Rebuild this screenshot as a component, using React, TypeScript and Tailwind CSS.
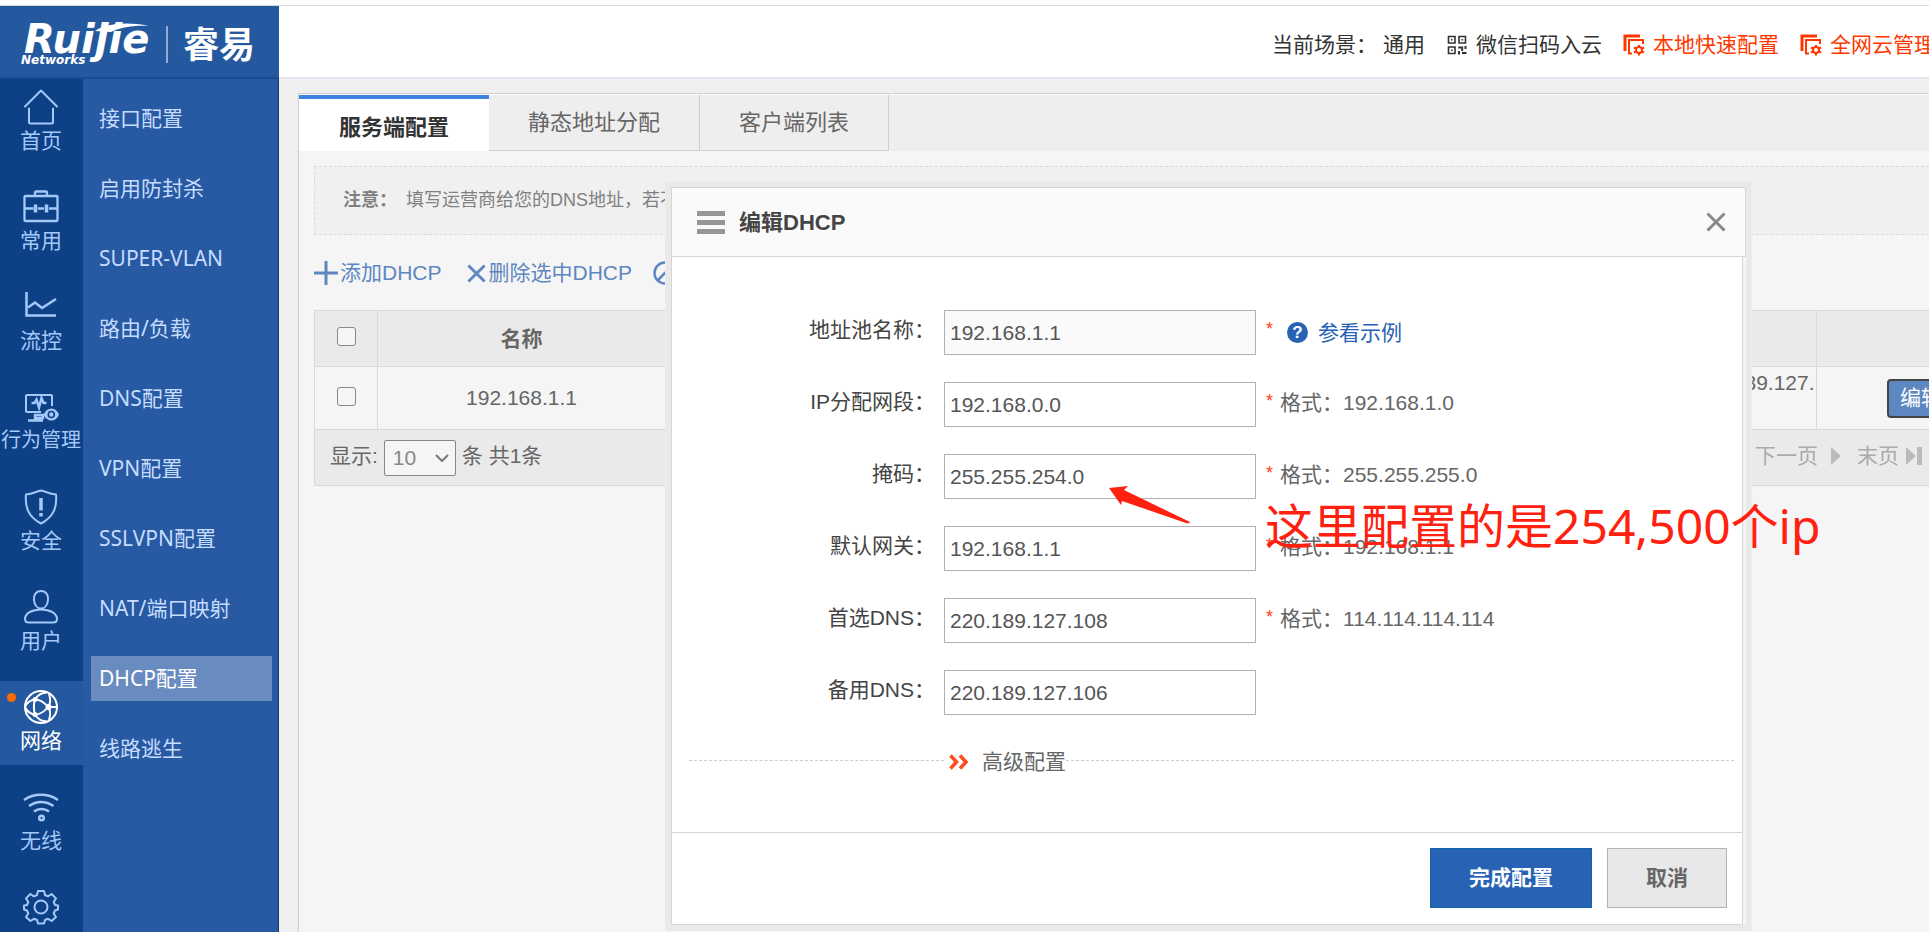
import React, { useState } from 'react';

type IconProps = { className?: string };

// Icons of the left rail, all drawn on a 36x36 grid
const HomeIcon = () => (
  <svg viewBox="0 0 36 36" className="h-9 w-9" fill="none" stroke="currentColor" strokeWidth="2" strokeLinejoin="round" strokeLinecap="round">
    <path d="M2 17.500 18 1.500 34 17.500M6 19.500V33a1.500 1.500 0 0 0 1.500 1.500h21A1.500 1.500 0 0 0 30 33V19.500" />
  </svg>
);

const ToolboxIcon = () => (
  <svg viewBox="0 0 36 36" className="h-9 w-9" fill="none" stroke="currentColor" strokeWidth="2.300">
    <rect x="1.500" y="7" width="33" height="25" rx="1" />
    <path d="M12 7V3.500a1 1 0 0 1 1-1h10a1 1 0 0 1 1 1V7M1.500 19.500h9M15 19.500h6M26 19.500h8.500" />
    <path d="M12.500 15.500v8M23.500 15.500v8" strokeWidth="3.500" />
  </svg>
);

const ChartIcon = () => (
  <svg viewBox="0 0 36 36" className="h-9 w-9" fill="none" stroke="currentColor" strokeWidth="2.500">
    <path d="M3.500 3v23.500H33" />
    <path d="m5 18.500 7-5 7 5.500L33 10" />
  </svg>
);

const MonitorIcon = () => (
  <svg viewBox="0 0 36 36" className="h-9 w-9" fill="none" stroke="currentColor" strokeWidth="2">
    <path d="M18 23H4a1 1 0 0 1-1-1V7a1 1 0 0 1 1-1h24a1 1 0 0 1 1 1v10" />
    <path d="M8.500 14h3l2-3.500 2.500 8 2.500-9.500 2 5h3" strokeWidth="2.500" />
    <path d="M12 26h8v3h-8zM5 31.500h15" strokeWidth="2.500" />
    <path d="M20.500 25.500C24 17.500 33 17.500 36 25.500c-3 8-12 8-15.500 0Z" fill="currentColor" stroke="none" />
    <circle cx="28.300" cy="25.500" r="3" stroke="#0d4084" strokeWidth="1.600" />
  </svg>
);

const ShieldIcon = () => (
  <svg viewBox="0 0 36 36" className="h-9 w-9" fill="none" stroke="currentColor" strokeWidth="2" strokeLinejoin="round">
    <path d="M18 1.500C14 2 10 5 3 5.500c-1 11 1 21.500 15 29C32 27 34 16.500 33 5.500 26 5 22 2 18 1.500Z" />
    <path d="M18 9v12.500M18 24v3.500" strokeWidth="3.500" />
  </svg>
);

const UserIcon = () => (
  <svg viewBox="0 0 36 36" className="h-9 w-9" fill="none" stroke="currentColor" strokeWidth="2">
    <path d="M18 2c-5 0-7.500 4-7 9 .5 4.500 3 8.500 7 8.500s6.500-4 7-8.500c.5-5-2-9-7-9Z" />
    <path d="M18 20.500c-9 0-16 4-16 9.500 0 2.500 1.500 3.500 4 3.500h24c2.500 0 4-1 4-3.500 0-5.500-7-9.500-16-9.500Z" />
  </svg>
);

const NetworkIcon = () => (
  <svg viewBox="0 0 36 36" className="h-9 w-9" fill="none" stroke="currentColor" strokeWidth="2">
    <circle cx="18" cy="18" r="16" />
    <path d="M12 10.500c5.500 0 9 2.500 13 7.500-4 5-7.500 7.500-13 7.500-1.500-4-1.500-11 0-15Z" />
    <path d="M12 10.500c3-5 7-7 12-7M12 10.500C7 11 4 13.500 2 18M12 25.500c-5-.5-8-3-10-7.500M12 25.500c3 5 7 7 12 7M25 18c2.500-3 3-7 1-13M25 18c2.500 3 3 7 1 13M25 18h9" />
    <circle cx="12" cy="10.500" r="1.500" fill="currentColor" />
    <circle cx="12" cy="25.500" r="1.500" fill="currentColor" />
    <circle cx="25.500" cy="18" r="2" fill="currentColor" />
  </svg>
);

const WifiIcon = () => (
  <svg viewBox="0 0 36 36" className="h-9 w-9" fill="none" stroke="currentColor" strokeWidth="2.500">
    <path d="M1 11c10-7 24-7 34 0M6 17c7.500-5.500 17-5.500 24.500 0M11 22.500c4.500-3.500 10.500-3.500 15 0" />
    <circle cx="18.500" cy="29" r="2.300" />
  </svg>
);

const GearIcon = () => (
  <svg viewBox="0 0 36 36" className="h-9 w-9" fill="none" stroke="currentColor" strokeWidth="2" strokeLinejoin="round">
    <path d="M15 2h6l1 4 3 1.300L28.600 5 33 9.400 30.700 13l1.300 3 3 .5v4l-3 1-1.300 3L33 28l-4.400 4-3.600-2.200L22 31l-1 3.500h-6L14 31l-3-1.200L7.400 32 3 28l2.300-3.500-1.300-3-3-1v-4l3-.5 1.300-3L3 9.400 7.400 5 11 7.300 14 6Z" />
    <circle cx="18" cy="18" r="6.500" />
  </svg>
);

const QrIcon = () => (
  <svg viewBox="0 0 20 20" className="h-5 w-5" fill="none" stroke="currentColor" strokeWidth="1.600">
    <path d="M1.500 1.500h6.500v6.500h-6.500zM12 1.500h6.500v6.500H12zM1.500 12h6.500v6.500h-6.500z" />
    <path d="M4 4.800h1.600M14.500 4.800h1.600M4 15.200h1.600" />
    <path d="M11.200 12.500h4v3.500M18.500 11v3M12 16v3.500M15 18h4.500" strokeWidth="2" />
  </svg>
);

const ConfigIcon = () => (
  <svg viewBox="0 0 22 22" className="h-[22px] w-[22px]" fill="none" stroke="currentColor" strokeWidth="2">
    <path d="M2 17V2h15" strokeWidth="3" />
    <path d="M9 19.500H6V6h14v4" />
    <circle cx="16" cy="16" r="3" />
    <path d="M16 11v2M16 19v2.500M11 13.500l2 1M19 17.500l2 1M11 18.500l2-1M19 14.500l2-1" />
  </svg>
);

const PlusIcon = ({ className }: IconProps) => (
  <svg viewBox="0 0 24 24" className={className} stroke="currentColor" strokeWidth="3">
    <path d="M12 0v24M0 12h24" />
  </svg>
);

const CrossIcon = ({ className }: IconProps) => (
  <svg viewBox="0 0 20 20" className={className} stroke="currentColor" strokeWidth="3">
    <path d="m1.500 1.500 17 17M18.500 1.500l-17 17" />
  </svg>
);

const BanIcon = () => (
  <svg viewBox="0 0 24 24" className="h-6 w-6" fill="none" stroke="currentColor" strokeWidth="2.500">
    <circle cx="12" cy="12" r="10.500" />
    <path d="m5 19 14-14" />
  </svg>
);

const railItems = [
  { label: '首页', icon: <HomeIcon /> },
  { label: '常用', icon: <ToolboxIcon /> },
  { label: '流控', icon: <ChartIcon /> },
  { label: '行为管理', icon: <MonitorIcon /> },
  { label: '安全', icon: <ShieldIcon /> },
  { label: '用户', icon: <UserIcon /> },
  { label: '网络', icon: <NetworkIcon /> },
  { label: '无线', icon: <WifiIcon /> },
  { label: '', icon: <GearIcon /> },
];

const menuItems = [
  '接口配置',
  '启用防封杀',
  'SUPER-VLAN',
  '路由/负载',
  'DNS配置',
  'VPN配置',
  'SSLVPN配置',
  'NAT/端口映射',
  'DHCP配置',
  '线路逃生',
];

const tabs = ['服务端配置', '静态地址分配', '客户端列表'];

interface Field {
  id: string;
  label: string;
  value: string;
  hint?: string;
  required?: boolean;
  readOnly?: boolean;
}

const fields: Field[] = [
  { id: 'pool', label: '地址池名称', value: '192.168.1.1', required: true, readOnly: true },
  { id: 'network', label: 'IP分配网段', value: '192.168.0.0', required: true, hint: '192.168.1.0' },
  { id: 'mask', label: '掩码', value: '255.255.254.0', required: true, hint: '255.255.255.0' },
  { id: 'gateway', label: '默认网关', value: '192.168.1.1', required: true, hint: '192.168.1.1' },
  { id: 'dns1', label: '首选DNS', value: '220.189.127.108', required: true, hint: '114.114.114.114' },
  { id: 'dns2', label: '备用DNS', value: '220.189.127.106' },
];

const Logo = () => (
  <div className="h-[71px] w-[279px] shrink-0 bg-[#25599f] pl-[21px] text-white">
    <svg viewBox="0 -11 240 71" className="h-[71px] w-[240px]" fill="currentColor" role="img" aria-label="Ruijie Networks 睿易">
      <text x="3" y="36" fontSize="40" fontWeight="700" fontStyle="italic" fontFamily="'DejaVu Sans', sans-serif">Ruijie</text>
      <path d="M74 14C84 7 104 4 128 9 112 8 98 11 90 15Z" />
      <text x="0" y="47" fontSize="12" fontWeight="700" fontStyle="italic" fontFamily="'DejaVu Sans', sans-serif">Networks</text>
      <path d="M145 9h2v37h-2z" opacity="0.5" />
      <text x="162" y="41" fontSize="36" fontWeight="700" fontFamily="'Noto Sans CJK SC', sans-serif">睿易</text>
    </svg>
  </div>
);

const TopBar = () => (
  <header className="flex border-t border-[#d9d9d9] bg-white text-[21px] text-[#333]">
    <Logo />
    <div className="-mr-12 flex flex-1 items-center justify-end pt-[6px] whitespace-nowrap">
      <span className="mr-[6px]">当前场景：</span>
      <a href="#scene" className="mr-[22px]">通用</a>
      <a href="#wechat" className="mr-[21px] flex items-center gap-[9px]"><QrIcon />微信扫码入云</a>
      <a href="#local" className="mr-[21px] flex items-center gap-2 text-[#ff3800]"><ConfigIcon />本地快速配置</a>
      <a href="#cloud" className="flex items-center gap-2 text-[#ff3800]"><ConfigIcon />全网云管理平台</a>
    </div>
  </header>
);

const Sidebar = () => (
  <aside className="flex w-[279px] shrink-0 overflow-hidden border-t-2 border-r border-t-[#1b4c92] border-r-[#1c3868]">
    <nav className="flex w-[83px] shrink-0 flex-col gap-4 bg-[#0d4084] pt-[2px]">
      {railItems.map(({ label, icon }) => {
        const active = label === '网络';
        return (
          <a
            key={label || 'system'}
            href="#module"
            aria-label={label || '系统'}
            className={`relative flex h-[84px] shrink-0 flex-col items-center pt-[8px] pr-px whitespace-nowrap ${
              active ? 'bg-[#25599f] text-white' : 'text-[#a5c8fa]'
            } ${label.length > 2 ? 'text-[20px]' : 'text-[21px]'}`}
          >
            {active && <span className="absolute top-3 left-[7px] h-[9px] w-[9px] rounded-full bg-[#ff6a00]" />}
            {icon}
            <span className="leading-[31px]">{label}</span>
          </a>
        );
      })}
    </nav>
    <nav className="flex flex-1 flex-col gap-[25px] bg-[#275aa2] px-2 pt-[17px] font-['Noto_Sans','Noto_Sans_CJK_SC',sans-serif] text-[21px]">
      {menuItems.map((item) => (
        <a
          key={item}
          href="#menu"
          className={`flex h-[45px] items-center pl-2 ${
            item === 'DHCP配置' ? 'mr-[-2px] bg-[#698cc0] text-white' : 'text-[#c6dcff]'
          }`}
        >
          {item}
        </a>
      ))}
    </nav>
  </aside>
);

const Tabs = () => (
  <div className="flex h-14 text-[22px] text-[#666]">
    {tabs.map((tab, i) => (
      <button
        key={tab}
        type="button"
        className={
          i === 0
            ? 'border-t-4 border-[#3c84e4] bg-white px-10 pt-1 font-bold text-[#333]'
            : 'border-r border-b border-[#cfcfcf] bg-[#eee] px-[39px]'
        }
      >
        {tab}
      </button>
    ))}
  </div>
);

const PoolTable = () => (
  <div className="-mr-10 text-[21px] text-[#666]">
    <table className="w-full table-fixed border-collapse border border-[#d9d9d9]">
      <colgroup>
        <col className="w-[63px]" />
        <col className="w-[288px]" />
        <col />
        <col className="w-[290px]" />
        <col className="w-[152px]" />
      </colgroup>
      <thead>
        <tr className="h-14 bg-[#eaeaea]">
          <th className="border border-[#d9d9d9] pb-1">
            <input type="checkbox" aria-label="全选" className="mx-auto block h-[19px] w-[19px] appearance-none rounded-[3px] border border-[#888] bg-[#f5f5f5]" />
          </th>
          <th className="border border-[#d9d9d9] font-bold">名称</th>
          <th className="border border-[#d9d9d9]" />
          <th className="border border-[#d9d9d9]" />
          <th className="border border-[#d9d9d9]" />
        </tr>
      </thead>
      <tbody>
        <tr className="h-[63px] bg-[#f5f5f5]">
          <td className="border border-[#d9d9d9] pb-1">
            <input type="checkbox" aria-label="选择 192.168.1.1" className="mx-auto block h-[19px] w-[19px] appearance-none rounded-[3px] border border-[#888] bg-[#f5f5f5]" />
          </td>
          <td className="border border-[#d9d9d9] text-center">192.168.1.1</td>
          <td className="border border-[#d9d9d9]" />
          <td className="border border-[#d9d9d9] text-center leading-[30px] whitespace-nowrap">
            220.189.127.108,220.189.127.
            <br />
            106
          </td>
          <td className="border border-[#d9d9d9] pl-[70px]">
            <button type="button" className="h-[39px] rounded-[4px] border-2 border-[#444] bg-[#5d87c1] px-[11px] whitespace-nowrap text-white">编辑</button>
          </td>
        </tr>
      </tbody>
    </table>
    <div className="flex h-14 items-center border-x border-b border-[#d9d9d9] bg-[#eaeaea] pr-[46px] pl-[15px]">
      <label htmlFor="page-size" className="pb-1">显示:</label>
      <div className="relative mx-[6px]">
        <select id="page-size" className="h-9 w-[72px] appearance-none rounded-[2px] border border-[#888] bg-[#f5f5f5] pl-2 text-[#888]">
          <option>10</option>
        </select>
        <svg viewBox="0 0 14 8" className="pointer-events-none absolute top-[14px] right-[7px] h-2 w-[14px]" fill="none" stroke="#777" strokeWidth="2">
          <path d="m1 1 6 6 6-6" />
        </svg>
      </div>
      <span className="pb-1">条 共1条</span>
      <div className="ml-auto flex items-center pb-[3px] text-[#aaa]">
        <a href="#next" className="mr-[13px]">下一页</a>
        <svg viewBox="0 0 10 18" className="mr-4 h-[18px] w-[10px]" fill="#bbb"><path d="M0 0l10 9-10 9z" /></svg>
        <a href="#last" className="mr-[7px]">末页</a>
        <svg viewBox="0 0 16 18" className="h-[18px] w-4" fill="#bbb"><path d="M0 0l10 9-10 9zM11 0h5v18h-5z" /></svg>
      </div>
    </div>
  </div>
);

const EditDialog = () => {
  const [values, setValues] = useState<Record<string, string>>(
    Object.fromEntries(fields.map((f) => [f.id, f.value]))
  );

  return (
    <div role="dialog" aria-label="编辑DHCP" className="absolute top-[181px] left-[665px] w-[1087px] border border-[#ececec] bg-[#e9e9e9] p-[5px] text-[21px] text-[#666]">
      <div className="bg-[#f5f5f5]">
        <div className="flex h-[70px] items-center border border-[#d6d6d6] bg-[#fafafa] pr-[19px] pl-[25px]">
          <svg viewBox="0 0 28 24" className="mr-[14px] h-6 w-7" fill="#969696">
            <path d="M0 1h28v5H0zM0 10h28v5H0zM0 19h28v5H0z" />
          </svg>
          <h2 className="text-[22px] font-bold text-[#444]">编辑DHCP</h2>
          <button type="button" aria-label="关闭" className="ml-auto text-[#888]">
            <CrossIcon className="h-5 w-5" />
          </button>
        </div>

        <form className="mr-[3px] border-x border-b border-[#d6d6d6] bg-white" onSubmit={(e) => e.preventDefault()}>
          <div className="flex flex-col gap-[27px] pt-[53px]">
            {fields.map((f) => (
              <div key={f.id} className="flex h-[45px] items-center">
                <label htmlFor={f.id} className="mr-[9px] w-[263px] pb-[6px] text-right text-[#444]">
                  {f.label}：
                </label>
                <input
                  id={f.id}
                  type="text"
                  value={values[f.id]}
                  readOnly={f.readOnly}
                  onChange={(e) => setValues({ ...values, [f.id]: e.target.value })}
                  className="h-[45px] w-[312px] border border-[#b0b0b0] bg-white px-[5px] text-[#555] read-only:bg-[#fafafa]"
                />
                {f.required && <span className="mr-[7px] ml-[10px] self-start pt-1 text-[18px] leading-[30px] text-[#ff3b10]">*</span>}
                {f.hint && <span className="pb-1">格式：{f.hint}</span>}
                {f.id === 'pool' && (
                  <a href="#example" className="ml-[7px] flex items-center gap-[10px] text-[#2762b5]">
                    <span className="flex h-[21px] w-[21px] items-center justify-center rounded-full bg-[#2762b5] text-[17px] font-bold text-white">?</span>
                    参看示例
                  </a>
                )}
              </div>
            ))}
          </div>

          <div className="mt-[27px] mr-2 mb-[54px] ml-[17px] flex h-9 items-center">
            <span className="w-[255px] border-t border-dashed border-[#ccc]" />
            <button type="button" className="flex items-center gap-[13px] pt-1 pl-[5px]">
              <svg viewBox="0 0 20 16" className="h-4 w-5" fill="none" stroke="#ff4a1c" strokeWidth="3.500">
                <path d="m1.500 1.500 6 6.500-6 6.500M11 1.500l6 6.500-6 6.500" />
              </svg>
              高级配置
            </button>
            <span className="flex-1 border-t border-dashed border-[#ccc]" />
          </div>

          <div className="flex justify-end gap-[15px] border-t border-[#d6d6d6] pt-[15px] pr-[15px] pb-4 font-bold">
            <button type="submit" className="h-[60px] w-[162px] border border-[#0e66a8] bg-[#2762b5] text-white">完成配置</button>
            <button type="button" className="h-[60px] w-[120px] border border-[#b3b3b3] bg-[#e8e8e8] text-[#666]">取消</button>
          </div>
        </form>
      </div>

      {/* Hand-made note over the form, pointing at the mask */}
      <svg viewBox="0 0 82 38" className="absolute top-[304px] left-[442px] h-[38px] w-[82px]" fill="#ff2010">
        <path d="M1 2 20 0l-4 4L82 36c-1 2-2 1-4 1L14 15l-1 4Z" />
      </svg>
      <p className="absolute top-[309px] left-[599px] font-['Noto_Sans','Noto_Sans_CJK_SC',sans-serif] text-[48px] leading-[70px] whitespace-nowrap text-[#ff2010]">
        这里配置的是254,500个ip
      </p>
    </div>
  );
};

const App: React.FC = () => (
  <div className="relative flex h-screen flex-col overflow-hidden bg-white pt-[5px] font-['Liberation_Sans','Noto_Sans_CJK_SC',sans-serif]">
    <TopBar />
    <div className="flex min-h-0 flex-1">
      <Sidebar />
      <main className="flex min-w-0 flex-1 flex-col border-t-2 border-[#e4e6f0] bg-[#efefef] pt-[14px] pl-[19px]">
        <div className="border-t border-l border-[#cfcfcf] bg-[#eee]">
          <div className="border-t border-white">
            <Tabs />
          </div>
        </div>
        <div className="flex-1 border-l border-[#cfcfcf] bg-[#f5f5f5] pt-[15px] pl-[15px]">
          <p className="-mr-10 flex h-[69px] items-center gap-[9px] border border-dashed border-[#d9d9d9] bg-[#f0f0f0] pl-7 text-[18px] text-[#808080]">
            <strong className="font-bold">注意：</strong>
            <span>填写运营商给您的DNS地址，若不</span>
          </p>
          <div className="flex h-[75px] items-center pt-px text-[21px] whitespace-nowrap text-[#5d87c1]">
            <button type="button" className="mr-[25px] flex items-center gap-[2px]"><PlusIcon className="h-6 w-6" />添加DHCP</button>
            <button type="button" className="mr-[21px] flex items-center gap-[3px]"><CrossIcon className="h-[19px] w-[19px]" />删除选中DHCP</button>
            <button type="button" aria-label="禁用"><BanIcon /></button>
          </div>
          <PoolTable />
        </div>
      </main>
    </div>
    <EditDialog />
  </div>
);

export default App;
